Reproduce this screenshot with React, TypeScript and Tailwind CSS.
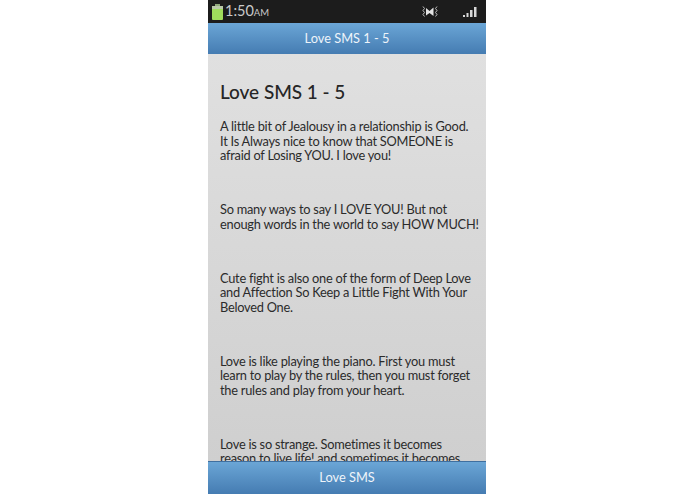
const messages = [
  ["A little bit of Jealousy in a relationship is Good.", "It Is Always nice to know that SOMEONE is", "afraid of Losing YOU. I love you!"],
  ["So many ways to say I LOVE YOU! But not", "enough words in the world to say HOW MUCH!"],
  ["Cute fight is also one of the form of Deep Love", "and Affection So Keep a Little Fight With Your", "Beloved One."],
  ["Love is like playing the piano. First you must", "learn to play by the rules, then you must forget", "the rules and play from your heart."],
  ["Love is so strange. Sometimes it becomes", "reason to live life! and sometimes it becomes"],
];

function StatusBar() {
  return (
    <div className="h-[23px] shrink-0 bg-[#1c1c1c] flex items-center pl-1 pr-[9px] text-[#c9c9c9]">
      <svg width="11" height="16" viewBox="0 0 11 16" className="mr-[2px]">
        <rect x="3" y="0" width="5" height="2" fill="#8fa87a" />
        <rect x="0" y="2" width="11" height="14" rx="1" fill="#9fdc5c" />
        <rect x="0" y="2" width="11" height="3" fill="#b9c9a8" />
      </svg>
      <span className="text-[14.5px] leading-none">1:50</span>
      <span className="text-[9.5px] leading-none mt-[3px]">AM</span>
      <svg width="16" height="14" viewBox="0 0 16 14" className="ml-auto mr-[25px]" fill="none">
        <path d="M1 1.5l1.5 2-1.5 2 1.5 2-1.5 2 1.5 2" stroke="#bdbdbd" strokeWidth="1" />
        <path d="M15 1.5l-1.5 2 1.5 2-1.5 2 1.5 2-1.5 2" stroke="#bdbdbd" strokeWidth="1" />
        <path d="M4 3l3.5 3L11.5 2.5V11L7.5 8 4 10.5z" fill="#e4e4e4" />
      </svg>
      <svg width="14" height="12" viewBox="0 0 14 12">
        <rect x="0" y="9" width="2" height="2" fill="#d8d8d8" />
        <rect x="3.5" y="7" width="2" height="4" fill="#d8d8d8" />
        <rect x="7" y="4" width="2.5" height="7" fill="#d8d8d8" />
        <rect x="11" y="1" width="2.5" height="10" fill="#d8d8d8" />
      </svg>
    </div>
  );
}

function BlueBar({ label, className }: { label: string; className: string }) {
  return (
    <div className={`shrink-0 flex items-center justify-center bg-gradient-to-b from-[#6ba6d6] to-[#457cb2] text-[#eef4fa] text-[12.8px] ${className}`}>
      {label}
    </div>
  );
}

export default function App() {
  return (
    <div className="w-[695px] h-[494px] bg-white overflow-hidden pl-[208px] font-['Lato',sans-serif]">
      <div className="w-[278px] h-full flex flex-col">
        <StatusBar />
        <BlueBar label="Love SMS 1 - 5" className="h-[31px]" />
        <main className="flex-1 min-h-0 overflow-hidden bg-gradient-to-b from-[#e0e0e0] to-[#cfcfcf] px-3 text-[#2b2b2b]">
          <h1 className="mt-[25px] text-[19px] leading-[26px] font-medium tracking-[-0.05px] text-[#262626]">Love SMS 1 - 5</h1>
          <div className="mt-[14px] flex flex-col gap-[39px] text-[12.8px] leading-[14.7px] tracking-[-0.24px] whitespace-nowrap">
            {messages.map((lines) => (
              <p key={lines[0]}>
                {lines.map((line) => (
                  <span key={line} className="block">{line}</span>
                ))}
              </p>
            ))}
          </div>
        </main>
        <BlueBar label="Love SMS" className="h-[33px] border-t border-[#3f6f9f]" />
      </div>
    </div>
  );
}
